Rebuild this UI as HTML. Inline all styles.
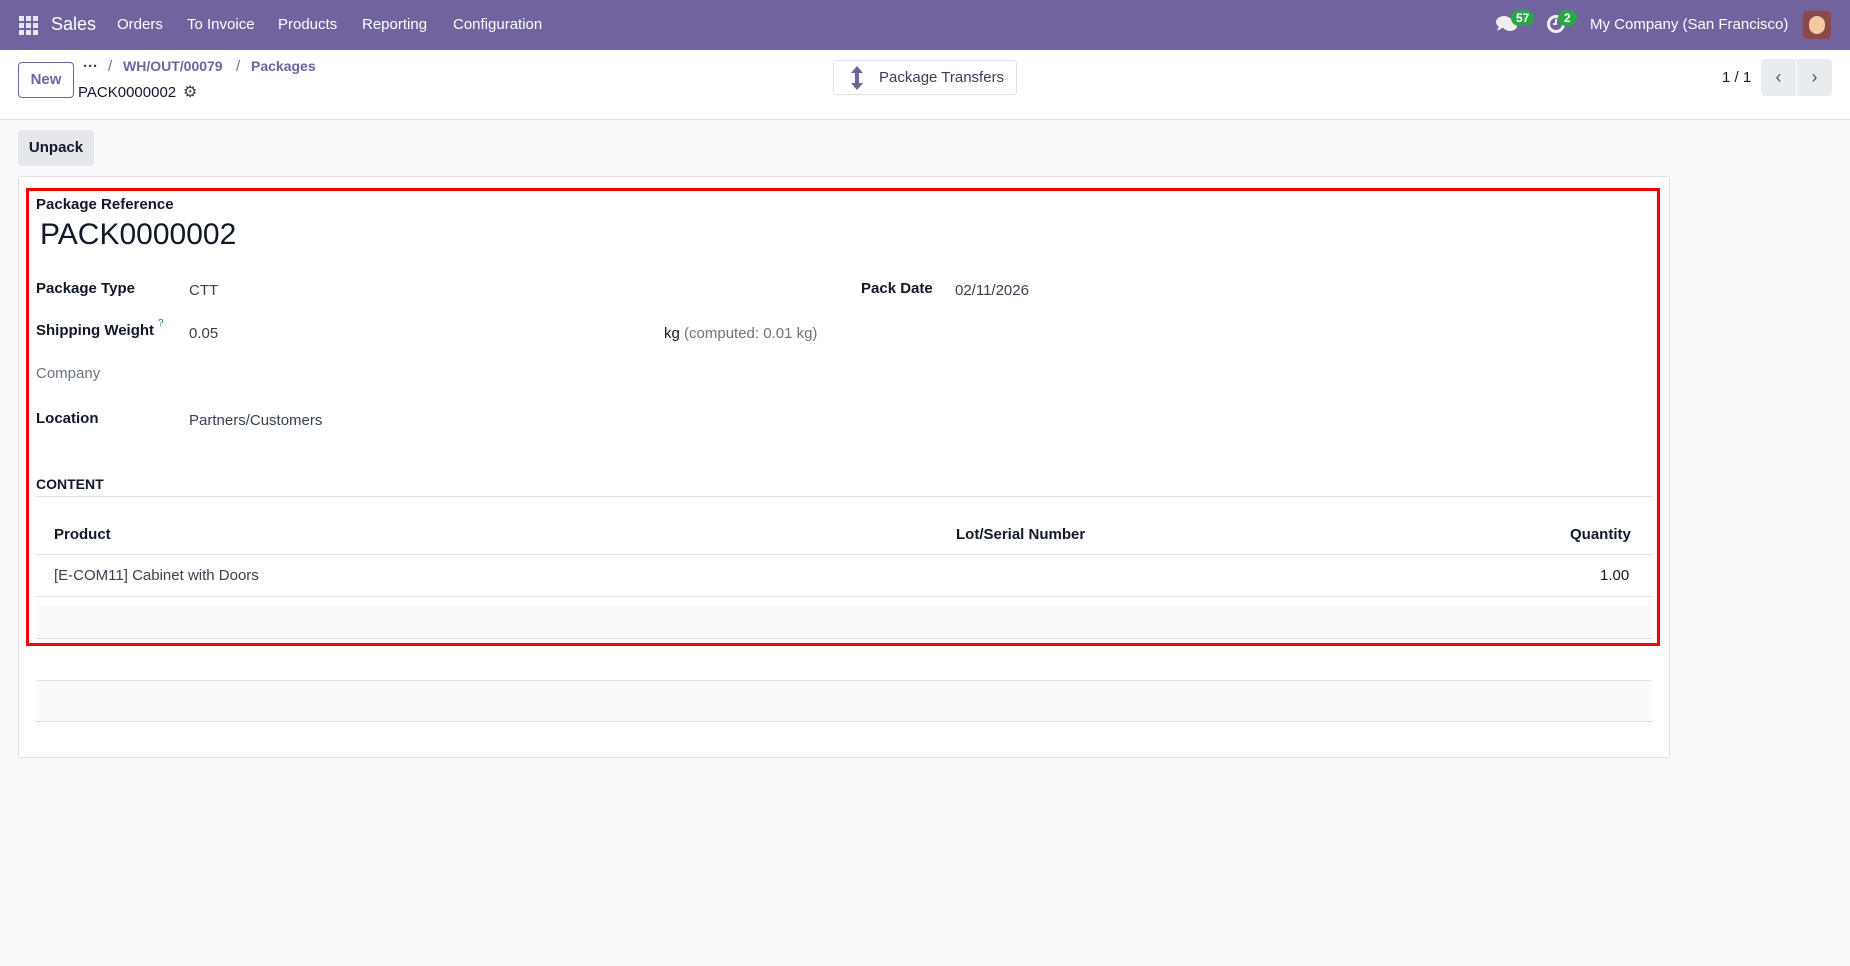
<!DOCTYPE html>
<html><head><meta charset="utf-8"><style>
*{box-sizing:border-box;margin:0;padding:0}
body{width:1850px;height:966px;background:#f8f9fa;font-family:"Liberation Sans",sans-serif;font-size:15px;color:#374151;position:relative;overflow:hidden}
.a{position:absolute;white-space:nowrap}
.nav{position:absolute;left:0;top:0;width:1850px;height:50px;background:#71639e;color:#fff;font-size:15px}
.cp{position:absolute;left:0;top:50px;width:1850px;height:70px;background:#fff;border-bottom:1px solid #dee2e6}
b{font-weight:bold;color:#111827}
.line{position:absolute;left:36px;width:1616px;height:1px;background:#dee2e6}
</style></head><body>
<div class="nav">
 <svg class="a" style="left:19px;top:16px" width="19" height="19" viewBox="0 0 19 19" fill="#e9e5f2"><rect x="0" y="0" width="5" height="5"/><rect x="7" y="0" width="5" height="5"/><rect x="14" y="0" width="5" height="5"/><rect x="0" y="7" width="5" height="5"/><rect x="7" y="7" width="5" height="5"/><rect x="14" y="7" width="5" height="5"/><rect x="0" y="14" width="5" height="5"/><rect x="7" y="14" width="5" height="5"/><rect x="14" y="14" width="5" height="5"/></svg>
 <span class="a" style="left:51px;top:14px;font-size:18px">Sales</span>
 <span class="a" style="left:117px;top:16px">Orders</span>
 <span class="a" style="left:187px;top:16px">To Invoice</span>
 <span class="a" style="left:278px;top:16px">Products</span>
 <span class="a" style="left:362px;top:16px">Reporting</span>
 <span class="a" style="left:453px;top:16px">Configuration</span>
 <svg class="a" style="left:1496px;top:15px" width="22" height="18" viewBox="0 0 22 18" fill="#eee"><ellipse cx="8" cy="7" rx="8" ry="6"/><path d="M3 11 L1 16 L8 12Z"/><ellipse cx="14" cy="11" rx="7" ry="5"/></svg>
 <span class="a" style="left:1511px;top:10px;background:#28a745;border-radius:9px;padding:1px 5px;font-size:12px;font-weight:bold">57</span>
 <svg class="a" style="left:1546px;top:14px" width="20" height="20" viewBox="0 0 20 20"><circle cx="10" cy="10" r="7.5" fill="none" stroke="#eee" stroke-width="3"/><path d="M10 5v5h-3" stroke="#eee" stroke-width="2" fill="none"/></svg>
 <span class="a" style="left:1558px;top:10px;background:#28a745;border-radius:9px;padding:1px 6px;font-size:12px;font-weight:bold">2</span>
 <span class="a" style="left:1590px;top:16px">My Company (San Francisco)</span>
 <div class="a" style="left:1803px;top:11px;width:28px;height:28px;border-radius:4px;background:#8a4a4a"><div style="margin:5px 6px;width:16px;height:18px;border-radius:8px;background:#f2c9a0"></div></div>
</div>
<div class="cp">
 <div class="a" style="left:18px;top:12px;width:56px;height:36px;border:1px solid #71639e;border-radius:4px;color:#71639e;font-weight:bold;text-align:center;line-height:34px">New</div>
 <span class="a" style="left:83px;top:8px;font-weight:bold;color:#374151">···</span>
 <span class="a" style="left:108px;top:8px;color:#6b7280">/</span>
 <span class="a" style="left:123px;top:8px;color:#71639e;font-weight:bold;font-size:14px">WH/OUT/00079</span>
 <span class="a" style="left:236px;top:8px;color:#6b7280">/</span>
 <span class="a" style="left:251px;top:8px;color:#71639e;font-weight:bold;font-size:14px">Packages</span>
 <span class="a" style="left:78px;top:34px;color:#111827">PACK0000002</span>
 <span class="a" style="left:183px;top:32px;font-size:16px;color:#374151">⚙</span>
 <div class="a" style="left:833px;top:10px;width:184px;height:35px;border:1px solid #dee2e6;border-radius:3px;background:#fff"></div>
 <svg class="a" style="left:850px;top:16px" width="14" height="24" viewBox="0 0 14 24" fill="#71639e"><path d="M7 0L13 7H9V17H13L7 24L1 17H5V7H1Z"/></svg>
 <span class="a" style="left:879px;top:19px">Package Transfers</span>
 <span class="a" style="left:1722px;top:19px;color:#111827">1 / 1</span>
 <div class="a" style="left:1761px;top:9px;width:35px;height:37px;background:#e9ecef;border-radius:4px 0 0 4px;text-align:center;line-height:36px;color:#555;font-size:18px">‹</div>
 <div class="a" style="left:1797px;top:9px;width:35px;height:37px;background:#e9ecef;border-radius:0 4px 4px 0;text-align:center;line-height:36px;color:#555;font-size:18px">›</div>
</div>
<div class="a" style="left:18px;top:130px;width:76px;height:36px;background:#e5e7eb;border-radius:4px;text-align:center;line-height:36px;font-weight:bold;color:#111827">Unpack</div>
<div class="a" style="left:18px;top:176px;width:1652px;height:582px;background:#fff;border:1px solid #dee2e6;border-radius:3px"></div>
<div class="a" style="left:36px;top:606px;width:1616px;height:31px;background:#f9fafb"></div>
<div class="a" style="left:36px;top:681px;width:1616px;height:40px;background:#f9fafb"></div>
<div class="line" style="top:496px"></div>
<div class="line" style="top:554px"></div>
<div class="line" style="top:596px"></div>
<div class="line" style="top:638px"></div>
<div class="line" style="top:680px"></div>
<div class="line" style="top:721px"></div>
<div class="a" style="left:26px;top:188px;width:1634px;height:458px;border:3px solid #ff0000"></div>
<b class="a" style="left:36px;top:196px">Package Reference</b>
<span class="a" style="left:40px;top:218px;font-size:30px;color:#111827">PACK0000002</span>
<b class="a" style="left:36px;top:280px">Package Type</b>
<span class="a" style="left:189px;top:282px">CTT</span>
<b class="a" style="left:861px;top:280px">Pack Date</b>
<span class="a" style="left:955px;top:282px">02/11/2026</span>
<b class="a" style="left:36px;top:322px">Shipping Weight</b><sup class="a" style="left:158px;top:318px;font-size:10px;color:#017e84">?</sup>
<span class="a" style="left:189px;top:325px">0.05</span>
<span class="a" style="left:664px;top:325px;color:#111827">kg <span style="color:#6b7280">(computed: 0.01 kg)</span></span>
<span class="a" style="left:36px;top:365px;color:#6b7280">Company</span>
<b class="a" style="left:36px;top:410px">Location</b>
<span class="a" style="left:189px;top:412px">Partners/Customers</span>
<b class="a" style="left:36px;top:476px;font-size:14px">CONTENT</b>
<b class="a" style="left:54px;top:526px">Product</b>
<b class="a" style="left:956px;top:526px">Lot/Serial Number</b>
<b class="a" style="left:1570px;top:526px">Quantity</b>
<span class="a" style="left:54px;top:567px">[E-COM11] Cabinet with Doors</span>
<span class="a" style="left:1600px;top:567px;color:#111827">1.00</span>
</body></html>
